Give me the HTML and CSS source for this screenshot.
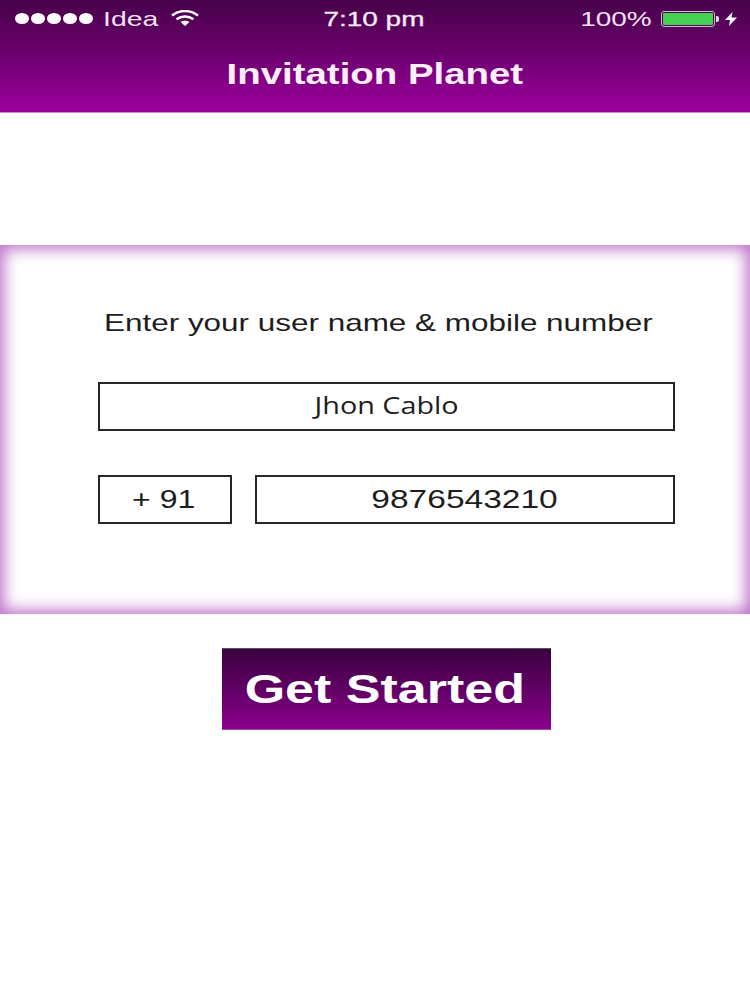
FILE: index.html
```html
<!DOCTYPE html>
<html lang="en">
<head>
<meta charset="utf-8">
<title>Invitation Planet</title>
<link rel="stylesheet" href="styles.css">
</head>
<body>
<header class="header">
  <div class="status">
    <div class="status-left">
      <div class="dots"><i></i><i></i><i></i><i></i><i></i></div>
      <span class="carrier">Idea</span>
      <svg class="wifi" width="28" height="16" viewBox="0 0 28 16"><path d="M1 5.500C8.500 -0.500 19.500 -0.500 27 5.500" fill="none" stroke="#fff" stroke-width="2.400"/><path d="M5.500 9.300C10.500 5.500 17.500 5.500 22.500 9.300" fill="none" stroke="#fff" stroke-width="2.400"/><path d="M9.500 12C12 10.200 16 10.200 18.500 12L14 16Z" fill="#fff"/></svg>
    </div>
    <div class="time"><span class="time-text">7:10 pm</span></div>
    <div class="status-right">
      <span class="percent">100%</span>
      <div class="battery"><div class="battery-fill"></div></div>
      <div class="battery-tip"></div>
      <svg class="bolt" width="12" height="14" viewBox="0 0 12 14"><path d="M7.500 0L0 8H5L4 14L12 5.500H6.500Z" fill="#fff"/></svg>
    </div>
  </div>
  <h1 class="title"><span class="wide title-text">Invitation Planet</span></h1>
</header>
<main class="main">
  <section class="panel">
    <p class="prompt"><span class="prompt-text">Enter your user name &amp; mobile number</span></p>
    <div class="field field-name"><span class="wide name-text">Jhon Cablo</span></div>
    <div class="row">
      <div class="field field-code"><span class="wide">+ 91</span></div>
      <div class="field field-phone"><span class="wide digits">9876543210</span></div>
    </div>
  </section>
  <button class="cta" type="button"><span class="wide cta-text">Get Started</span></button>
</main>
</body>
</html>
```
FILE: styles.css
```css
* { box-sizing: border-box; }
html, body { margin: 0; padding: 0; background: #fff; }
body { width: 750px; height: 1000px; overflow: hidden; font-family: "Liberation Sans", Arial, sans-serif; color: #1c1c1c; }

.wide { display: inline-block; transform: scaleX(1.28); white-space: nowrap; }

.header {
  height: 113px;
  background: linear-gradient(#47024a 0%, #6a006c 45%, #9a009c 98%);
  border-bottom: 1px solid #c98ad0;
  color: #fff;
}
.status {
  height: 37px;
  padding: 0 14px 0 15px;
  display: flex;
  align-items: center;
  justify-content: space-between;
  position: relative;
}
.status-left, .status-right { display: flex; align-items: center; }
.dots { display: flex; gap: 2px; }
.dots i { width: 14px; height: 11px; border-radius: 50%; background: #fff; display: block; }
.carrier { margin-left: 10px; font-size: 21px; width: 40px; color: #f2e4f2; display: inline-block; transform: scaleX(1.35); transform-origin: left center; }
.wifi { margin-left: 28px; margin-top: -1px; }
.time { position: absolute; left: 0; right: 2px; text-align: center; font-size: 21px; color: #f6ecf6; -webkit-text-stroke: .3px #f6ecf6; }
.time-text { display: inline-block; transform: scaleX(1.33); }
.percent { font-size: 21px; color: #f2e4f2; margin-right: 9px; display: inline-block; transform: scaleX(1.33); transform-origin: right center; }
.battery { width: 54px; height: 16px; border: 1.500px solid #cdb8cd; border-radius: 3px; padding: 1px; }
.battery-fill { height: 100%; background: #44d152; border-radius: 1px; }
.battery-tip { width: 3px; height: 6px; background: #e6d8e6; border-radius: 0 2px 2px 0; margin-left: 1px; }
.bolt { margin-left: 6px; margin-right: -1px; }
.title { margin: 0; padding-top: 17px; text-align: center; font-size: 30px; line-height: 40px; font-weight: 700; color: #fbeefb; }

.main { display: flex; flex-direction: column; align-items: center; padding-top: 132px; }
.panel {
  width: 750px;
  height: 369px;
  padding-top: 62px;
  background: #fff;
  box-shadow: inset 0 0 15px 4px #bf72cb;
  display: flex;
  flex-direction: column;
  align-items: flex-start;
  padding-left: 98px;
}
.prompt { margin: 0; font-size: 24px; line-height: 32px; width: 577px; padding-left: 6px; white-space: nowrap; color: #1d1d1d; }
.prompt-text { display: inline-block; transform: scaleX(1.31); transform-origin: left center; }
.field {
  height: 49px;
  border: 2px solid #262626;
  display: flex;
  align-items: center;
  justify-content: center;
  font-size: 25px;
  color: #1d1d1d;
  background: #fff;
}
.field-name { width: 577px; margin-top: 43px; font-family: "Open Sans", sans-serif; font-size: 23px; padding-bottom: 4px; }
.name-text { transform: scaleX(1.25); }
.row { display: flex; gap: 23px; margin-top: 44px; }
.field-code { width: 134px; padding-right: 3px; }
.field-phone { width: 420px; padding-bottom: 1px; }
.digits { transform: scaleX(1.34); }
.cta {
  width: 329px;
  height: 82px;
  margin-top: 34px;
  margin-left: 23px;
  border: 0;
  border-top: 1px solid #555;
  border-bottom: 1px solid #a648ad;
  padding: 0 4px 0 0;
  background: linear-gradient(#3c0040 0%, #5c0060 45%, #8b008d 100%);
  color: #fff;
  font-family: "Liberation Sans", Arial, sans-serif;
  font-size: 40px;
  font-weight: 700;
}
.cta-text { transform: scaleX(1.3); }
```
